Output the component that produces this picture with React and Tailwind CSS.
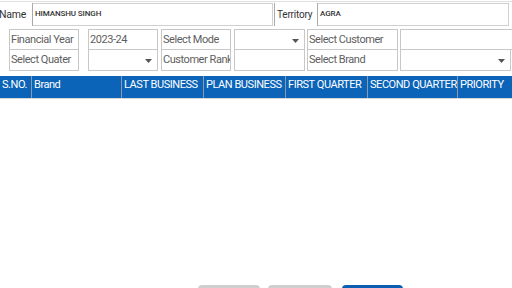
import React from 'react';

const Caret = () => (
  <svg width="7" height="4" viewBox="0 0 7 4" className="absolute right-[5px] top-[9px]">
    <path d="M0 0 L7 0 L3.5 4 Z" fill="#555" />
  </svg>
);

const Box = ({ w, text, select, noTop }) => (
  <div
    className={`relative h-[21px] border border-[#c8c8c8] ${noTop ? 'border-t-0' : ''} px-[1px] text-[11px] tracking-[-0.45px] leading-[19px] text-[#5e5e5e] whitespace-nowrap overflow-hidden ${w}`}
  >
    {text}
    {select && <Caret />}
  </div>
);

const cols = [
  ['S.NO.', 'w-[32px]'],
  ['Brand', 'w-[90px]'],
  ['LAST BUSINESS', 'w-[82px]'],
  ['PLAN BUSINESS', 'w-[82px]'],
  ['FIRST QUARTER', 'w-[82px]'],
  ['SECOND QUARTER', 'w-[90px]'],
  ['PRIORITY', 'w-[60px]'],
];

export default function App() {
  return (
    <div className="w-[512px] h-[288px] overflow-hidden bg-white font-['Roboto',sans-serif]">
      <div className="pt-[1px]">
        <div className="h-[1px] bg-[#e0e0e0]" />
        <div className="flex h-[23px] mt-[1px] items-stretch">
          <div className="w-[33px] shrink-0 border-r border-[#aaa] text-[10.5px] tracking-[-0.2px] leading-[23px] text-[#333] overflow-hidden">
            <span className="-ml-[1px] inline-block">Name</span>
          </div>
          <div className="w-[240px] border border-l-0 border-[#d0d0d0] mr-[1px] text-[8px] font-medium leading-[20px] text-[#333] pl-[2px] tracking-[-0.1px]">
            HIMANSHU SINGH
          </div>
          <div className="w-[44px] border-l border-r border-[#aaa] text-[10px] tracking-[-0.2px] leading-[23px] text-[#333] pl-[2px]">
            Territory
          </div>
          <div className="w-[191px] border border-l-0 border-[#d0d0d0] text-[8px] font-medium leading-[20px] text-[#333] pl-[2px] tracking-[-0.1px]">
            AGRA
          </div>
        </div>

        <div className="flex mt-[3px] pl-[9px]">
          <div className="flex flex-col mr-[9px]">
            <Box w="w-[70px]" text="Financial Year" />
            <Box w="w-[70px]" text="Select Quater" noTop />
          </div>
          <div className="flex flex-col mr-[3px]">
            <Box w="w-[70px]" text="2023-24" />
            <Box w="w-[70px]" select noTop />
          </div>
          <div className="flex flex-col mr-[3px]">
            <Box w="w-[70px]" text="Select Mode" />
            <Box w="w-[70px]" text="Customer Rank" noTop />
          </div>
          <div className="flex flex-col mr-[2px]">
            <Box w="w-[71px]" select />
            <Box w="w-[71px]" noTop />
          </div>
          <div className="flex flex-col mr-[2px]">
            <Box w="w-[91px]" text="Select Customer" />
            <Box w="w-[91px]" text="Select Brand" noTop />
          </div>
          <div className="flex flex-col">
            <Box w="w-[120px]" />
            <Box w="w-[111px]" select noTop />
          </div>
        </div>

        <div className="flex mt-[5px] h-[23px] bg-[#0b64b8] border-b border-[#d8d8d8]">
          {cols.map(([t, w]) => (
            <div
              key={t}
              className={`${w} shrink-0 border-r border-[#8a9bb0] pl-[2px] text-[11px] tracking-[-0.45px] leading-[18px] text-white whitespace-nowrap overflow-hidden`}
            >
              {t}
            </div>
          ))}
        </div>

        <div className="flex mt-[186px] pl-[198px] gap-[8px]">
          <div className="w-[62px] h-[10px] rounded-t-[4px] bg-[#cfcfcf]" />
          <div className="w-[64px] h-[10px] rounded-t-[4px] bg-[#cfcfcf] mr-[2px]" />
          <div className="w-[61px] h-[10px] rounded-t-[4px] bg-[#0b5fb3]" />
        </div>
      </div>
    </div>
  );
}
